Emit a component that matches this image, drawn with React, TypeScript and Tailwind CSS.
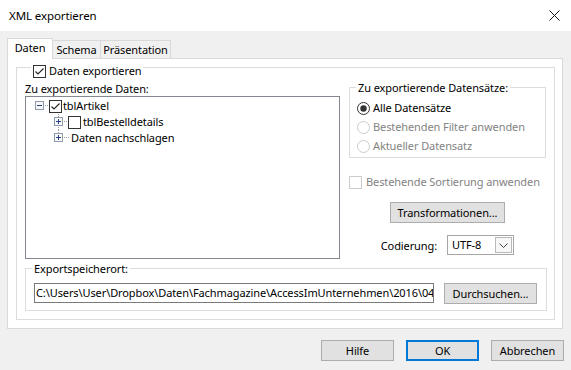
import React from 'react';

const dots = (x1: number, y1: number, x2: number, y2: number) => {
  const out: React.ReactElement[] = [];
  if (y1 === y2) {
    for (let x = x1; x <= x2; x += 2) out.push(<rect key={`h${x}`} x={x} y={y1} width={1} height={1} fill="#a0a0a0" />);
  } else {
    for (let y = y1; y <= y2; y += 2) out.push(<rect key={`v${y}`} x={x1} y={y} width={1} height={1} fill="#a0a0a0" />);
  }
  return out;
};

function Expander({ open, lineTop, lineBottom, tail = 5 }: { open?: boolean; lineTop?: boolean; lineBottom?: boolean; tail?: number }) {
  return (
    <svg width={9 + tail} height={16} className="shrink-0">
      {lineTop && dots(4, 0, 4, 2)}
      {lineBottom && dots(4, 13, 4, 15)}
      <rect x={0.5} y={3.5} width={8} height={8} fill="#f6f7f9" stroke="#8f9cab" />
      <line x1={2} y1={7.5} x2={7} y2={7.5} stroke="#2c3f86" />
      {!open && <line x1={4.5} y1={5} x2={4.5} y2={10} stroke="#2c3f86" />}
      {dots(10, 7, 8 + tail, 7)}
    </svg>
  );
}

function CheckBox({ checked, disabled }: { checked?: boolean; disabled?: boolean }) {
  return (
    <svg width={13} height={13} className="shrink-0">
      <rect x={0.5} y={0.5} width={12} height={12} fill="#fff" stroke={disabled ? '#cccccc' : '#333333'} />
      {checked && <path d="M2.5 6.5 L5 9 L10.5 3.5" fill="none" stroke="#222" strokeWidth={1.1} />}
    </svg>
  );
}

function Radio({ checked, disabled }: { checked?: boolean; disabled?: boolean }) {
  return (
    <svg width={13} height={13} className="shrink-0">
      <circle cx={6.5} cy={6.5} r={6} fill="#fff" stroke={disabled ? '#cccccc' : '#333333'} />
      {checked && <circle cx={6.5} cy={6.5} r={3.2} fill="#333333" />}
    </svg>
  );
}

function Button({ label, width, primary }: { label: string; width: string; primary?: boolean }) {
  return (
    <button
      className={`${width} h-[21px] flex items-center justify-center bg-[#e1e1e1] text-black leading-none shrink-0 ${
        primary ? 'border-2 border-[#0078d7]' : 'border border-[#adadad]'
      }`}
    >
      {label}
    </button>
  );
}

export default function App() {
  return (
    <div className="w-[571px] h-[370px] bg-[#f0f0f0] text-[11px] tracking-[-0.1px] text-black font-['Noto_Sans',sans-serif] overflow-hidden whitespace-nowrap">
      <div className="h-[31px] bg-white flex items-center justify-between pl-[9px] pr-[11px]">
        <span className="text-[11.5px]">XML exportieren</span>
        <svg width={11} height={11}>
          <path d="M0.5 0.5 L10.5 10.5 M10.5 0.5 L0.5 10.5" stroke="#111" strokeWidth={1} />
        </svg>
      </div>

      <div className="pl-[7px] pt-[7px]">
        <div className="flex items-end h-[20px]">
          <div className="relative z-10 w-[46px] h-[21px] -mb-px bg-white border border-b-0 border-[#d9d9d9] flex items-start justify-center pt-[1px] leading-[16px]">
            Daten
          </div>
          <div className="w-[48px] h-[18px] border border-l-0 border-b-0 border-[#d9d9d9] flex items-center justify-center leading-[16px]">
            Schema
          </div>
          <div className="w-[70px] h-[18px] border border-l-0 border-b-0 border-[#d9d9d9] flex items-center justify-center leading-[16px]">
            Präsentation
          </div>
        </div>

        <div className="w-[556px] bg-white border border-[#d9d9d9] pt-[8px] pb-[8px] pl-[8px]">
          <div className="w-[539px] border border-[#dcdcdc] pl-[8px] pb-[8px]">
            <div className="-mt-[4px] ml-[6px] px-[2px] bg-white w-fit h-[14px] flex items-center gap-[3px]">
              <CheckBox checked />
              <span className="leading-[14px]">Daten exportieren</span>
            </div>

            <div className="flex">
              <div className="w-[315px] shrink-0">
                <div className="mt-[3px] h-[15px] leading-[15px]">Zu exportierende Daten:</div>
                <div className="h-[163px] border border-[#828790] bg-white pt-[1px]">
                  <div className="h-[16px] flex items-center pl-[9px]">
                    <Expander open />
                    <CheckBox checked />
                    <span className="ml-[1px] leading-[16px]">tblArtikel</span>
                  </div>
                  <div className="h-[16px] flex items-center pl-[28px]">
                    <Expander lineTop lineBottom />
                    <CheckBox />
                    <span className="ml-[2px] leading-[16px]">tblBestelldetails</span>
                  </div>
                  <div className="h-[16px] flex items-center pl-[28px]">
                    <Expander lineTop tail={7} />
                    <span className="ml-[1px] leading-[16px]">Daten nachschlagen</span>
                  </div>
                </div>
              </div>

              <div className="ml-[9px] w-[197px] shrink-0 flex flex-col">
                <div className="mt-[9px] border border-[#dcdcdc] pb-[1px]">
                  <div className="-mt-[8px] ml-[6px] px-[2px] bg-white w-fit h-[15px] leading-[15px]">
                    Zu exportierende Datensätze:
                  </div>
                  <div className="mt-[4px] pl-[7px]">
                    <div className="h-[19px] flex items-center gap-[3px]">
                      <Radio checked />
                      <span>Alle Datensätze</span>
                    </div>
                    <div className="h-[19px] flex items-center gap-[3px] text-[#838383]">
                      <Radio disabled />
                      <span>Bestehenden Filter anwenden</span>
                    </div>
                    <div className="h-[19px] flex items-center gap-[3px] text-[#838383]">
                      <Radio disabled />
                      <span>Aktueller Datensatz</span>
                    </div>
                  </div>
                </div>

                <div className="mt-[17px] h-[15px] flex items-center gap-[4px] text-[#838383]">
                  <CheckBox disabled />
                  <span>Bestehende Sortierung anwenden</span>
                </div>

                <div className="mt-[12px] flex justify-center">
                  <Button label="Transformationen..." width="w-[115px]" />
                </div>

                <div className="mt-[12px] flex items-center justify-end gap-[10px] pr-[32px]">
                  <span className="pt-[2px]">Codierung:</span>
                  <div className="w-[67px] h-[20px] border border-[#a6a6a6] bg-white flex items-center">
                    <span className="pl-[4px] flex-1">UTF-8</span>
                    <div className="w-[17px] h-[16px] mr-[1px] border border-[#b9b9b9] bg-[#f7f7f7] flex items-center justify-center">
                      <svg width={9} height={5}>
                        <path d="M0.5 0.5 L4.5 4.5 L8.5 0.5" fill="none" stroke="#444" strokeWidth={1} />
                      </svg>
                    </div>
                  </div>
                </div>
              </div>
            </div>

            <div className="mt-[9px] w-[522px] border border-[#dcdcdc] pl-[8px] pb-[6px]">
              <div className="-mt-[8px] -ml-[2px] px-[2px] bg-white w-fit h-[15px] leading-[15px]">Exportspeicherort:</div>
              <div className="mt-[7px] flex items-start gap-[10px]">
                <div className="w-[400px] h-[20px] border border-[#7a7a7a] bg-white pl-[1px] flex items-center overflow-hidden">
                  C:\Users\User\Dropbox\Daten\Fachmagazine\AccessImUnternehmen\2016\04
                </div>
                <Button label="Durchsuchen..." width="w-[93px]" />
              </div>
            </div>
          </div>
        </div>
      </div>

      <div className="mt-[11px] pr-[7px] flex justify-end gap-[12px]">
        <Button label="Hilfe" width="w-[73px]" />
        <Button label="OK" width="w-[73px]" primary />
        <Button label="Abbrechen" width="w-[73px]" />
      </div>
    </div>
  );
}
